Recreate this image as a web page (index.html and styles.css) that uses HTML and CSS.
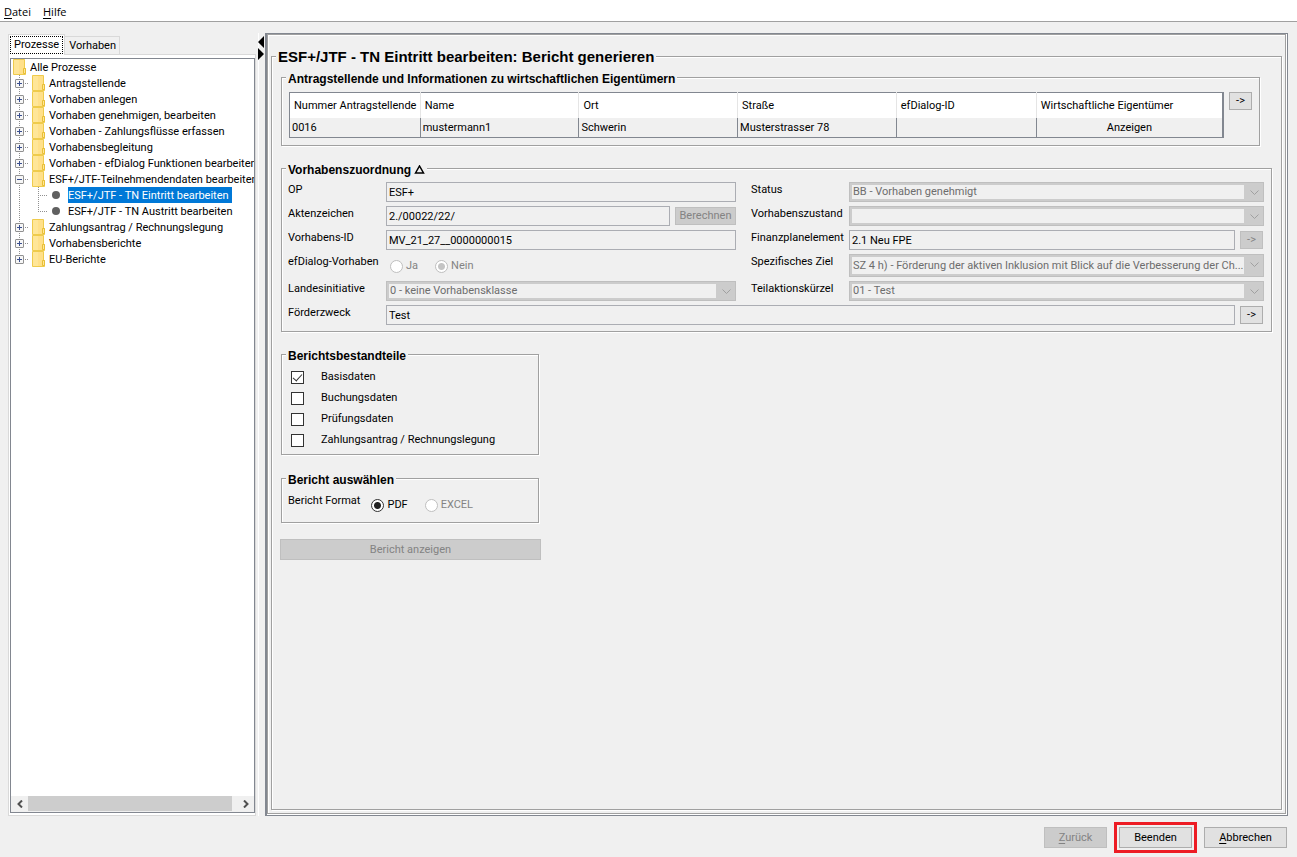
FILE: index.html
```html
<!DOCTYPE html>
<html lang="de">
<head>
  <meta charset="UTF-8" />
  <meta name="viewport" content="width=device-width, initial-scale=1.0"/>
  <title>ESF+/JTF - TN Eintritt bearbeiten</title>
  <link rel="stylesheet" href="styles.css">
</head>
<body>

  <svg class="defs" width="0" height="0">
    <symbol id="folder" viewBox="0 0 13 16">
      <path d="M.5 .5h11v9h1v6h-12z" fill="#ffe08a" stroke="#efcb4c"/>
      <path d="M1 1h5v14h-5z" fill="#ffe698"/>
      <path d="M10.500 9.500h2v5h-2z" fill="#ffe698" stroke="#e8bf35"/>
    </symbol>
    <symbol id="chevron" viewBox="0 0 9 6">
      <path d="M.5 .5l4 4 4-4" fill="none" stroke="#a0a0a0"/>
    </symbol>
  </svg>

  <nav class="menubar">
    <a href="#datei"><u>D</u>atei</a>
    <a href="#hilfe"><u>H</u>ilfe</a>
  </nav>

  <main class="workspace">
    <!-- Navigation -->
    <aside class="sidebar">
      <div class="tabs">
        <button class="tab active"><span>Prozesse</span></button>
        <button class="tab">Vorhaben</button>
      </div>
      <div class="tab-page">
        <div class="tree-box">
          <div class="tree">
            <div class="node"><svg class="folder"><use href="#folder"/></svg><span>Alle Prozesse</span></div>
            <ul>
              <li><div class="node"><button class="toggle plus" aria-label="Öffnen"></button><svg class="folder"><use href="#folder"/></svg><span>Antragstellende</span></div></li>
              <li><div class="node"><button class="toggle plus" aria-label="Öffnen"></button><svg class="folder"><use href="#folder"/></svg><span>Vorhaben anlegen</span></div></li>
              <li><div class="node"><button class="toggle plus" aria-label="Öffnen"></button><svg class="folder"><use href="#folder"/></svg><span>Vorhaben genehmigen, bearbeiten</span></div></li>
              <li><div class="node"><button class="toggle plus" aria-label="Öffnen"></button><svg class="folder"><use href="#folder"/></svg><span>Vorhaben - Zahlungsflüsse erfassen</span></div></li>
              <li><div class="node"><button class="toggle plus" aria-label="Öffnen"></button><svg class="folder"><use href="#folder"/></svg><span>Vorhabensbegleitung</span></div></li>
              <li><div class="node"><button class="toggle plus" aria-label="Öffnen"></button><svg class="folder"><use href="#folder"/></svg><span>Vorhaben - efDialog Funktionen bearbeiten</span></div></li>
              <li>
                <div class="node"><button class="toggle" aria-label="Schließen"></button><svg class="folder"><use href="#folder"/></svg><span>ESF+/JTF-Teilnehmendendaten bearbeiten</span></div>
                <ul class="leaves">
                  <li><div class="node"><i class="dot"></i><span class="selected">ESF+/JTF - TN Eintritt bearbeiten</span></div></li>
                  <li><div class="node"><i class="dot"></i><span>ESF+/JTF - TN Austritt bearbeiten</span></div></li>
                </ul>
              </li>
              <li><div class="node"><button class="toggle plus" aria-label="Öffnen"></button><svg class="folder"><use href="#folder"/></svg><span>Zahlungsantrag / Rechnungslegung</span></div></li>
              <li><div class="node"><button class="toggle plus" aria-label="Öffnen"></button><svg class="folder"><use href="#folder"/></svg><span>Vorhabensberichte</span></div></li>
              <li><div class="node"><button class="toggle plus" aria-label="Öffnen"></button><svg class="folder"><use href="#folder"/></svg><span>EU-Berichte</span></div></li>
            </ul>
          </div>
          <div class="scrollbar">
            <button aria-label="Nach links"><svg width="6" height="8" viewBox="0 0 6 8"><path d="M5 .5L1.500 4 5 7.500" fill="none" stroke="#505050" stroke-width="2"/></svg></button>
            <div class="thumb"></div>
            <button aria-label="Nach rechts"><svg width="6" height="8" viewBox="0 0 6 8"><path d="M1 .5L4.500 4 1 7.500" fill="none" stroke="#505050" stroke-width="2"/></svg></button>
          </div>
        </div>
      </div>
    </aside>

    <div class="splitter">
      <svg width="7" height="24" viewBox="0 0 7 24"><path d="M7 0v12L1 6zM1 12v12l6-6z" fill="#000"/></svg>
    </div>

    <!-- Inhalt -->
    <section class="content">
      <div class="content-inner">
        <fieldset class="page">
          <legend>ESF+/JTF - TN Eintritt bearbeiten: Bericht generieren</legend>

          <fieldset class="owners">
            <legend>Antragstellende und Informationen zu wirtschaftlichen Eigentümern</legend>
            <table>
              <colgroup><col class="c-nr"><col class="c-name"><col class="c-name"><col class="c-name"><col class="c-id"><col></colgroup>
              <thead>
                <tr><th>Nummer Antragstellende</th><th>Name</th><th>Ort</th><th>Straße</th><th>efDialog-ID</th><th>Wirtschaftliche Eigentümer</th></tr>
              </thead>
              <tbody>
                <tr><td>0016</td><td>mustermann1</td><td>Schwerin</td><td>Musterstrasser 78</td><td></td><td class="center">Anzeigen</td></tr>
              </tbody>
            </table>
            <button class="btn small">-&gt;</button>
          </fieldset>

          <fieldset class="project">
            <legend>Vorhabenszuordnung <svg width="11" height="9" viewBox="0 0 11 9"><path d="M1.500 8L5.500 1l4 7z" fill="none" stroke="#000" stroke-width="1.500"/></svg></legend>
            <label for="op">OP</label>
            <input id="op" type="text" value="ESF+" readonly>
            <label class="second" for="status">Status</label>
            <div class="combo"><select id="status" disabled><option>BB - Vorhaben genehmigt</option></select><svg><use href="#chevron"/></svg></div>

            <label for="akz">Aktenzeichen</label>
            <div class="group"><input id="akz" type="text" value="2./00022/22/" readonly><button class="btn small calc" disabled>Berechnen</button></div>
            <label class="second" for="zustand">Vorhabenszustand</label>
            <div class="combo"><select id="zustand" disabled><option></option></select><svg><use href="#chevron"/></svg></div>

            <label for="vid">Vorhabens-ID</label>
            <input id="vid" type="text" value="MV_21_27__0000000015" readonly>
            <label class="second" for="fpe">Finanzplanelement</label>
            <div class="group end"><input id="fpe" type="text" value="2.1 Neu FPE" readonly><button class="btn small" disabled>-&gt;</button></div>

            <span class="caption">efDialog-Vorhaben</span>
            <div class="radios">
              <label><input type="radio" name="efd" disabled>Ja</label>
              <label><input type="radio" name="efd" disabled checked>Nein</label>
            </div>
            <label class="second" for="ziel">Spezifisches Ziel</label>
            <div class="combo tall"><select id="ziel" disabled><option>SZ 4 h) - Förderung der aktiven Inklusion mit Blick auf die Verbesserung der Ch...</option></select><svg><use href="#chevron"/></svg></div>

            <label for="li">Landesinitiative</label>
            <div class="combo"><select id="li" disabled><option>0 - keine Vorhabensklasse</option></select><svg><use href="#chevron"/></svg></div>
            <label class="second" for="tak">Teilaktionskürzel</label>
            <div class="combo"><select id="tak" disabled><option>01 - Test</option></select><svg><use href="#chevron"/></svg></div>

            <label for="zweck">Förderzweck</label>
            <div class="group end wide"><input id="zweck" type="text" value="Test" readonly><button class="btn small">-&gt;</button></div>
          </fieldset>

          <fieldset class="parts">
            <legend>Berichtsbestandteile</legend>
            <label><input type="checkbox" checked>Basisdaten</label>
            <label><input type="checkbox">Buchungsdaten</label>
            <label><input type="checkbox">Prüfungsdaten</label>
            <label><input type="checkbox">Zahlungsantrag / Rechnungslegung</label>
          </fieldset>

          <fieldset class="format">
            <legend>Bericht auswählen</legend>
            <span class="caption">Bericht Format</span>
            <div class="radios">
              <label><input type="radio" name="fmt" checked>PDF</label>
              <label><input type="radio" name="fmt" disabled>EXCEL</label>
            </div>
          </fieldset>

          <button class="btn show-report" disabled>Bericht anzeigen</button>
        </fieldset>
      </div>
    </section>
  </main>

  <footer>
    <button class="btn back" disabled><u>Z</u>urück</button>
    <div class="highlight"><button class="btn">Beenden</button></div>
    <button class="btn cancel"><u>A</u>bbrechen</button>
  </footer>

</body>
</html>
```

FILE: styles.css
```css
:root {
  --bg: #f0f0f0;
  --line: #a0a0a0;
  --frame: #828790;
  --field: #abadb3;
  --disabled: #cccccc;
  --disabled-line: #bfbfbf;
  --disabled-text: #838383;
  --select: #0078d7;
}

* { box-sizing: border-box; }

body {
  margin: 0;
  min-height: 100vh;
  display: flex;
  flex-direction: column;
  background: var(--bg);
  color: #000;
  font-family: Roboto, Tahoma, sans-serif;
  font-size: 11px;
  line-height: 14px;
}

button, input, select {
  font: inherit;
  color: inherit;
  margin: 0;
}

u { text-underline-offset: 2px; }
.defs { position: absolute; }

/* menu */
.menubar {
  display: flex;
  gap: 12px;
  height: 22px;
  padding: 3px 4px;
  background: #fff;
  border-bottom: 1px solid var(--line);
  font-family: "Open Sans", sans-serif;
  line-height: 18px;
}

.menubar a {
  color: inherit;
  text-decoration: none;
}

.workspace {
  flex: 1;
  display: flex;
  padding: 11px 9px 0 8px;
}

/* sidebar */
.sidebar {
  width: 248px;
  display: flex;
  flex-direction: column;
  padding-top: 1px;
}

.tabs {
  display: flex;
  align-items: flex-end;
  height: 20px;
}

.tab {
  height: 18px;
  padding: 1px 3px 0 4px;
  background: var(--bg);
  border: 1px solid #d9d9d9;
  border-width: 1px 1px 0 0;
  white-space: nowrap;
}

.tab.active {
  height: 21px;
  margin-bottom: -1px;
  padding: 1px;
  background: #fff;
  border-width: 1px 1px 0;
  z-index: 1;
}

.tab.active span {
  display: block;
  padding: 1px 3px;
  border: 1px dotted #000;
}

.tab-page {
  flex: 1;
  display: flex;
  padding: 3px 0 2px 1px;
  background: #fff;
  border: 1px solid #d9d9d9;
}

.tree-box {
  flex: 1;
  min-width: 0;
  display: flex;
  flex-direction: column;
  border: 1px solid var(--frame);
}

.tree {
  flex: 1;
  overflow: hidden;
  padding-left: 2px;
}

.tree ul {
  margin: 0;
  padding: 0 0 0 2px;
  list-style: none;
}

/* dotted connector down the toggles */
.tree > ul > li {
  background: repeating-linear-gradient(#909090 0 1px, transparent 1px 2px) 4px 0 / 1px 100% no-repeat;
}

.tree > ul > li:last-child { background-size: 1px 8px; }

.node {
  display: flex;
  align-items: center;
  height: 16px;
  white-space: nowrap;
}

.node span {
  height: 16px;
  padding-right: 3px;
  line-height: 17px;
}

.folder {
  flex: none;
  width: 13px;
  height: 16px;
  margin-right: 4px;
}

.toggle {
  flex: none;
  width: 9px;
  height: 9px;
  margin-right: 8px;
  padding: 0;
  border: 1px solid #919191;
  border-radius: 1px;
  background: linear-gradient(#3a4f8f, #3a4f8f) 1px 3px / 5px 1px no-repeat, #f6f6f6;
}

.toggle.plus {
  background:
    linear-gradient(#3a4f8f, #3a4f8f) 1px 3px / 5px 1px no-repeat,
    linear-gradient(#3a4f8f, #3a4f8f) 3px 1px / 1px 5px no-repeat,
    #f6f6f6;
}

.tree > ul > li > .node {
  background: repeating-linear-gradient(90deg, #909090 0 1px, transparent 1px 2px) 10px 8px / 4px 1px no-repeat;
}

.tree .leaves { padding-left: 23px; }

.leaves li {
  background:
    repeating-linear-gradient(#909090 0 1px, transparent 1px 2px) 0 0 / 1px 100% no-repeat,
    repeating-linear-gradient(90deg, #909090 0 1px, transparent 1px 2px) 0 8px / 10px 1px no-repeat;
}

.leaves li:last-child { background-size: 1px 8px, 10px 1px; }

.dot {
  width: 8px;
  height: 8px;
  margin: 0 8px 0 14px;
  border-radius: 4px;
  background: #606060;
}

.node .selected {
  background: var(--select);
  color: #fff;
}

.scrollbar {
  display: flex;
  height: 16px;
  background: var(--bg);
}

.scrollbar button {
  width: 17px;
  padding: 0;
  border: 0;
  background: none;
  display: flex;
  align-items: center;
  justify-content: center;
}

.scrollbar button:last-child { margin-left: auto; }

.thumb {
  width: 204px;
  height: 15px;
  background: #cdcdcd;
}

.splitter {
  width: 9px;
  padding: 3px 0 0 1px;
  background: linear-gradient(#fff, #fff) 2px 0 / 1px 100% no-repeat;
}

.splitter svg { display: block; }

/* content */
.content {
  flex: 1;
  min-width: 0;
  display: flex;
  padding: 0 1px 1px 0;
  border: 1px solid var(--frame);
  border-left-width: 2px;
  background: #fff;
}

.content-inner {
  flex: 1;
  min-width: 0;
  display: flex;
  padding: 11px 3px 3px;
  border: 1px solid var(--line);
  box-shadow: inset 1px 1px 0 #fff;
  background: var(--bg);
}

fieldset {
  min-width: 0;
  margin: 0;
  padding: 0;
  border: 1px solid var(--line);
  box-shadow: 1px 1px 0 #fff, inset 1px 1px 0 #fff;
}

legend {
  margin-left: -2px;
  padding: 3px 2px 0;
  background: var(--bg);
  font: bold 12px/14px "Liberation Sans", Arial, sans-serif;
}

.page {
  flex: 1;
  padding: 3px 9px 9px;
}

.page > legend {
  margin-left: -5px;
  padding-top: 2px;
  font-size: 15px;
  line-height: 18px;
}

.owners {
  display: flex;
  align-items: flex-start;
  gap: 5px;
  margin-right: 12px;
  padding: 6px 7px 7px 6px;
}

table {
  flex: 1;
  width: 100%;
  margin-left: 1px;
  table-layout: fixed;
  border-collapse: collapse;
  border: 1px solid var(--frame);
  border-right-width: 2px;
}

.c-nr { width: 14%; }
.c-name { width: 17%; }
.c-id { width: 15%; }

th {
  height: 25px;
  padding: 2px 4px 0;
  background: #fff;
  border-right: 1px solid #e5e5e5;
  font-weight: normal;
  text-align: left;
  white-space: nowrap;
}

td {
  height: 20px;
  padding: 1px 2px 0;
  border-right: 1px solid var(--frame);
}

.center { text-align: center; }

.project {
  display: grid;
  grid-template-columns: 98px minmax(0, 350fr) 113px minmax(0, 415fr);
  row-gap: 4px;
  align-items: start;
  margin-top: 14px;
  padding: 5px 7px 6px 6px;
}

.project > label, .caption { padding-top: 1px; }
.project > .second { padding-left: 15px; }

input[type="text"] {
  width: 100%;
  height: 20px;
  padding: 0 2px;
  background: var(--bg);
  border: 1px solid var(--field);
  border-radius: 0;
}

.group {
  display: flex;
  align-items: center;
  gap: 5px;
}

.group input { flex: 1; min-width: 0; }
.group.end { padding-right: 1px; }
.wide { grid-column: span 3; }

.btn {
  height: 21px;
  padding: 0;
  background: #e1e1e1;
  border: 1px solid #adadad;
  border-radius: 0;
}

.btn:disabled {
  background: var(--disabled);
  border-color: var(--disabled-line);
  color: var(--disabled-text);
}

.btn.small {
  flex: none;
  width: 23px;
  height: 18px;
  line-height: 12px;
}

.btn.calc { width: 61px; }

.combo {
  position: relative;
  height: 20px;
  padding: 2px 19px 2px 2px;
  background: var(--disabled);
  border: 1px solid var(--disabled-line);
}

.combo.tall { height: 23px; }

.combo select {
  display: block;
  appearance: none;
  width: 100%;
  height: 100%;
  padding: 0 1px;
  background: var(--bg);
  border: 0;
  border-radius: 0;
  color: #6d6d6d;
  opacity: 1;
}

.combo svg {
  position: absolute;
  top: 7px;
  right: 4px;
  width: 9px;
  height: 6px;
}

input[type="radio"],
input[type="checkbox"] {
  appearance: none;
  flex: none;
  width: 13px;
  height: 13px;
  background: #fff;
  border: 1px solid #333;
}

input[type="radio"] {
  border-radius: 50%;
}

input[type="radio"]:checked {
  background: radial-gradient(circle, #222 3px, #fff 4px);
}

input[type="radio"]:disabled { border-color: var(--disabled-line); }

input[type="radio"]:disabled:checked {
  background: radial-gradient(circle, #c4c4c4 3px, #fff 4px);
}

.radios {
  display: flex;
  gap: 17px;
  padding: 5px 0 0 4px;
}

.radios label {
  display: flex;
  align-items: center;
  gap: 3px;
}

.radios label:has(:disabled) { color: var(--disabled-text); }

.parts, .format { width: 258px; }

.parts {
  margin-top: 14px;
  padding: 6px 6px 1px;
}

.parts label {
  display: flex;
  align-items: flex-start;
  gap: 17px;
  height: 21px;
  line-height: 16px;
}

.parts input {
  position: relative;
  margin: 2px 0 0 3px;
}

.parts input:checked::after {
  content: "";
  position: absolute;
  left: 3px;
  top: 0;
  width: 4px;
  height: 8px;
  border: solid #333;
  border-width: 0 1px 1px 0;
  transform: rotate(42deg);
}

.format {
  display: flex;
  gap: 7px;
  margin-top: 15px;
  padding: 6px 6px 10px;
}

.show-report {
  display: block;
  width: 261px;
  margin: 16px 0 0 -1px;
}

footer {
  display: flex;
  justify-content: flex-end;
  align-items: center;
  gap: 7px;
  padding: 6px 10px 4px;
}

.back { width: 63px; }
.cancel { width: 83px; }

.highlight {
  padding: 2px;
  border: 3px solid #ed1c24;
}

.highlight .btn {
  display: block;
  width: 73px;
}
```
